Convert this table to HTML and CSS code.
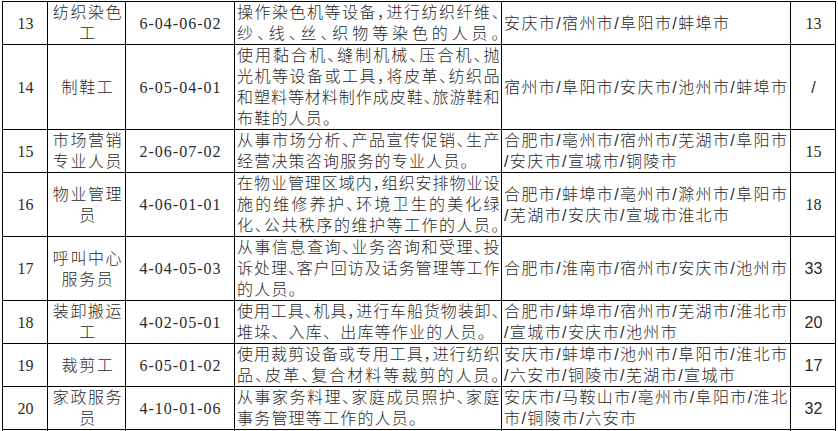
FILE: index.html
```html
<!DOCTYPE html>
<html lang="zh-CN">
<head>
<meta charset="utf-8">
<title>职业列表</title>
<link rel="stylesheet" href="styles.css">
</head>
<body>
<table class="grid">
  <colgroup>
    <col class="c-no"><col class="c-name"><col class="c-code"><col class="c-desc"><col class="c-city"><col class="c-cnt">
  </colgroup>
  <tbody>
    <tr>
      <td class="no">13</td>
      <td class="name">纺织染色工</td>
      <td class="code">6-04-06-02</td>
      <td class="desc"><span class="j">操作染色机等设备，进行纺织纤维、</span><span class="j">纱、线、丝、织物等染色的人员。</span></td>
      <td class="city"><span class="ln">安庆市/宿州市/阜阳市/蚌埠市</span></td>
      <td class="cnt">13</td>
    </tr>
    <tr>
      <td class="no">14</td>
      <td class="name">制鞋工</td>
      <td class="code">6-05-04-01</td>
      <td class="desc"><span class="j">使用黏合机、缝制机械、压合机、抛</span><span class="j">光机等设备或工具，将皮革、纺织品</span><span class="j">和塑料等材料制作成皮鞋、旅游鞋和</span><span class="ln">布鞋的人员。</span></td>
      <td class="city"><span class="ln">宿州市/阜阳市/安庆市/池州市/蚌埠市</span></td>
      <td class="cnt sans">/</td>
    </tr>
    <tr>
      <td class="no">15</td>
      <td class="name">市场营销专业人员</td>
      <td class="code">2-06-07-02</td>
      <td class="desc"><span class="j">从事市场分析、产品宣传促销、生产</span><span class="ln">经营决策咨询服务的专业人员。</span></td>
      <td class="city"><span class="ln">合肥市/亳州市/宿州市/芜湖市/阜阳市</span><span class="ln">/安庆市/宣城市/铜陵市</span></td>
      <td class="cnt">15</td>
    </tr>
    <tr>
      <td class="no">16</td>
      <td class="name">物业管理员</td>
      <td class="code">4-06-01-01</td>
      <td class="desc"><span class="j">在物业管理区域内，组织安排物业设</span><span class="j">施的维修养护、环境卫生的美化绿</span><span class="j">化、公共秩序的维护等工作的人员。</span></td>
      <td class="city"><span class="ln">合肥市/蚌埠市/亳州市/滁州市/阜阳市</span><span class="ln">/芜湖市/安庆市/宣城市淮北市</span></td>
      <td class="cnt">18</td>
    </tr>
    <tr>
      <td class="no">17</td>
      <td class="name">呼叫中心服务员</td>
      <td class="code">4-04-05-03</td>
      <td class="desc"><span class="j">从事信息查询、业务咨询和受理、投</span><span class="j">诉处理、客户回访及话务管理等工作</span><span class="ln">的人员。</span></td>
      <td class="city"><span class="ln">合肥市/淮南市/宿州市/安庆市/池州市</span></td>
      <td class="cnt sans">33</td>
    </tr>
    <tr>
      <td class="no">18</td>
      <td class="name">装卸搬运工</td>
      <td class="code">4-02-05-01</td>
      <td class="desc"><span class="j">使用工具、机具，进行车船货物装卸、</span><span class="ln">堆垛、入库、出库等作业的人员。</span></td>
      <td class="city"><span class="ln">合肥市/蚌埠市/宿州市/芜湖市/淮北市</span><span class="ln">/宣城市/安庆市/池州市</span></td>
      <td class="cnt sans">20</td>
    </tr>
    <tr>
      <td class="no">19</td>
      <td class="name">裁剪工</td>
      <td class="code">6-05-01-02</td>
      <td class="desc"><span class="j">使用裁剪设备或专用工具，进行纺织</span><span class="j">品、皮革、复合材料等裁剪的人员。</span></td>
      <td class="city"><span class="ln">安庆市/蚌埠市/池州市/阜阳市/淮北市</span><span class="ln">/六安市/铜陵市/芜湖市/宣城市</span></td>
      <td class="cnt sans">17</td>
    </tr>
    <tr>
      <td class="no">20</td>
      <td class="name">家政服务员</td>
      <td class="code">4-10-01-06</td>
      <td class="desc"><span class="j">从事家务料理、家庭成员照护、家庭</span><span class="ln">事务管理等工作的人员。</span></td>
      <td class="city"><span class="ln">安庆市/马鞍山市/亳州市/阜阳市/淮北</span><span class="ln">市/铜陵市/六安市</span></td>
      <td class="cnt sans">32</td>
    </tr>
    <tr class="tail">
      <td></td><td></td><td></td><td></td><td></td><td></td>
    </tr>
  </tbody>
</table>
</body>
</html>
```

FILE: styles.css
```css
html, body {
  margin: 0;
  background: #fff;
}

body {
  padding: 1px 0 0 2px;
  font-family: "Liberation Sans", "Noto Sans CJK SC", sans-serif;
  font-size: 16px;
  color: #2a2a2a;
}

.grid {
  border-collapse: collapse;
  table-layout: fixed;
  width: 834px;
}

.c-no { width: 45px; }
.c-name { width: 78px; }
.c-code { width: 109px; }
.c-desc { width: 267px; }
.c-city { width: 289px; }
.c-cnt { width: 45px; }

.grid td {
  border: 1px solid #000;
  padding: 0 1px 0 2px;
  vertical-align: middle;
  line-height: 21px;
  font-size: 16px;
  font-weight: 300;
  font-family: "Liberation Sans", "Noto Sans CJK SC", sans-serif;
}

.grid td.no {
  text-align: center;
  font-family: "Liberation Serif", "Noto Sans CJK SC", serif;
}

.grid td.name {
  text-align: center;
  letter-spacing: 1.6px;
  padding-left: 4px;
}

.grid td.code {
  text-align: center;
  font-family: "Liberation Serif", serif;
  letter-spacing: 1px;
}

.desc .j {
  display: block;
  text-align: justify;
  text-align-last: justify;
  letter-spacing: 0.5px;
  font-feature-settings: "halt";
}

.desc .ln {
  display: block;
  letter-spacing: 1.2px;
}

.grid td.city {
  letter-spacing: 1.4px;
}

.city .ln {
  display: block;
  white-space: nowrap;
}

.grid td.cnt {
  text-align: center;
  font-family: "Liberation Serif", serif;
}

.grid td.cnt.sans {
  font-family: "Liberation Sans", sans-serif;
}

.tail td {
  height: 20px;
}
```
